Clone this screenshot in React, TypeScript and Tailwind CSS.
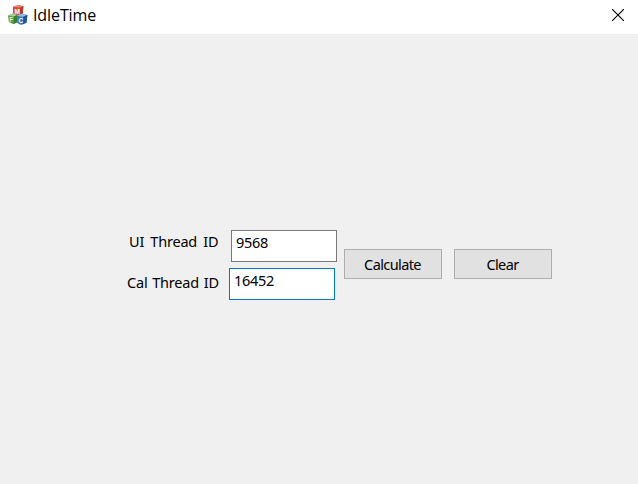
import { useState } from "react";

function MfcIcon() {
  return (
    <svg width="22" height="22" viewBox="0 0 22 22" aria-hidden="true">
      <path d="M6 2.8 L11.5 0.9 L16.4 2.2 L15.8 9.6 L10.5 11.4 L6 9.6Z" fill="#d4503c" />
      <path d="M6 2.8 L11.5 0.9 L16.4 2.2 L12.6 3.6Z" fill="#e98672" />
      <path d="M13.4 3.4 L16.4 2.2 L15.8 9.6 L13 10.6Z" fill="#b23a2a" />
      <path d="M1 11.4 L5.5 9.6 L10.2 11 L10 18.4 L6 20 L1.8 18Z" fill="#5a9e48" />
      <path d="M1 11.4 L5.5 9.6 L10.2 11 L6.6 12.6Z" fill="#a9cf98" />
      <path d="M6.8 12.4 L10.2 11 L10 18.4 L6.6 20Z" fill="#397f35" />
      <path d="M10 11.8 L14.6 9.8 L20.4 11 L19.6 18.6 L14 21 L10.2 19Z" fill="#3c78b8" />
      <path d="M10 11.8 L14.6 9.8 L20.4 11 L16 13Z" fill="#8dbbe2" />
      <path d="M16.2 12.8 L20.4 11 L19.6 18.6 L15.8 20.4Z" fill="#235596" />
      <text x="7.6" y="9.8" fontSize="6.5" fontWeight="bold" fill="#fff" className="font-['Liberation_Sans',sans-serif]">M</text>
      <text x="2.2" y="18.2" fontSize="6.5" fontWeight="bold" fill="#e4f0dd" className="font-['Liberation_Sans',sans-serif]">F</text>
      <text x="11.4" y="18.8" fontSize="6.5" fontWeight="bold" fill="#fff" className="font-['Liberation_Sans',sans-serif]">C</text>
    </svg>
  );
}

function TitleBar() {
  return (
    <header className="flex h-[34px] items-start bg-white pl-[7px] pr-[14px]">
      <div className="mt-[4px]"><MfcIcon /></div>
      <h1 className="ml-[4px] mt-[3px] whitespace-nowrap font-['Open_Sans',sans-serif] text-[16px] leading-[24px] tracking-[-0.1px]">IdleTime</h1>
      <button aria-label="Close" className="ml-auto mt-[9px]">
        <svg width="12" height="12" viewBox="0 0 12 12" className="block" aria-hidden="true">
          <path d="M0 0 L12 12 M12 0 L0 12" stroke="#000" strokeWidth="1.1" />
        </svg>
      </button>
    </header>
  );
}

const inputClass =
  "h-[32px] w-[106px] border bg-white pb-[8px] pl-[4px] text-[14.5px] leading-[20px] tracking-[-0.3px] outline-none";
const buttonClass =
  "h-[30px] w-[98px] border border-[#adadad] bg-[#e1e1e1] pr-[1px] text-[14.5px] leading-[20px] tracking-[-0.6px]";

export default function App() {
  const [ui, setUi] = useState("9568");
  const [cal, setCal] = useState("16452");
  const clear = () => {
    setUi("");
    setCal("");
  };
  return (
    <div className="flex h-[484px] w-[638px] flex-col overflow-hidden bg-[#f0f0f0] font-['Noto_Sans',sans-serif] text-[15px] text-black">
      <TitleBar />
      <main className="flex items-start pl-[127px] pt-[196px]">
        <div className="flex w-[210px] flex-col gap-[6px]">
          <label className="flex h-[32px] pl-[2px]">
            <span className="mt-[1px] w-[102px] whitespace-nowrap text-[14.5px] leading-[20px] tracking-[-0.2px] [word-spacing:2.6px]">UI Thread ID</span>
            <input value={ui} onChange={(e) => setUi(e.target.value)} className={`${inputClass} border-[#7a7a7a]`} />
          </label>
          <label className="flex h-[32px]">
            <span className="mt-[4px] w-[102px] whitespace-nowrap text-[14.5px] leading-[20px] tracking-[-0.2px] [word-spacing:1.2px]">Cal Thread ID</span>
            <input value={cal} onChange={(e) => setCal(e.target.value)} className={`${inputClass} border-[#0078d7]`} />
          </label>
        </div>
        <div className="ml-[7px] mt-[19px] flex gap-[12px]">
          <button className={buttonClass}>Calculate</button>
          <button onClick={clear} className={buttonClass}>Clear</button>
        </div>
      </main>
    </div>
  );
}
